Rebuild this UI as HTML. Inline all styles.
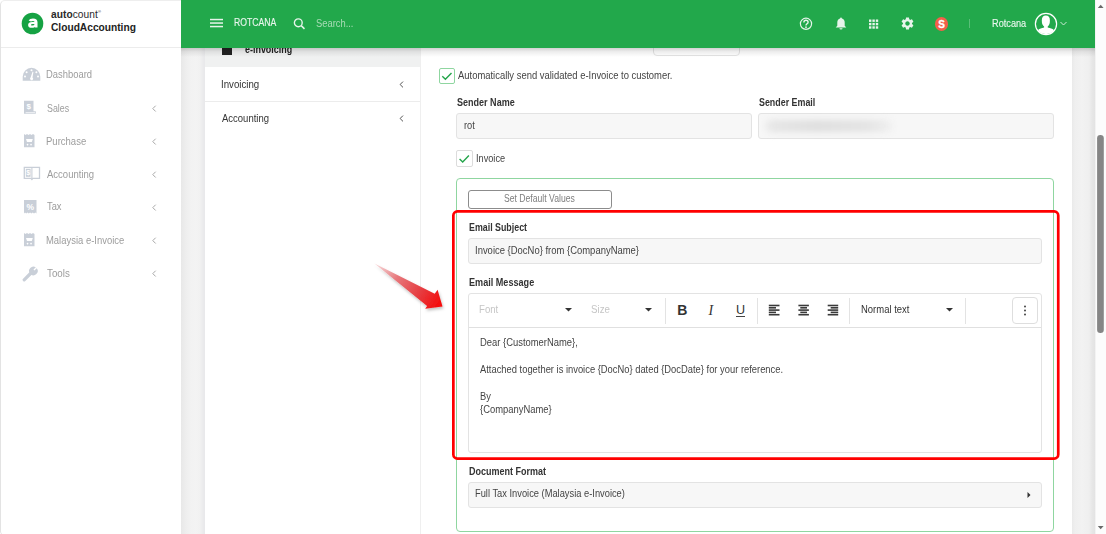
<!DOCTYPE html>
<html><head><meta charset="utf-8">
<style>
*{box-sizing:border-box;margin:0;padding:0}
html,body{width:1106px;height:534px;overflow:hidden;background:#fff;font-family:"Liberation Sans",sans-serif;position:relative}
.a{position:absolute;white-space:nowrap}
.tx{line-height:12px;height:12px}
#side{left:0;top:0;width:182px;height:535.5px;background:#fff;border-left:1px solid #e3e3e3;border-top:1px solid #eeeeee;border-bottom:1px solid #e3e3e3;border-bottom-left-radius:5px;border-top-left-radius:5px}
#logoSep{left:1px;top:47px;width:180px;height:1px;background:#ececec}
#content{left:181px;top:0;width:914px;height:534px;background:#efefef}
#gap{left:181px;top:0;width:24px;height:534px;background:linear-gradient(90deg,#e8e8e8 0px,#eeeeee 5px,#f2f2f2 10px,#f3f3f3 15px,#f1f1f1 19px,#e9e9eb 23px)}
#lpanel{left:205px;top:0;width:216px;height:534px;background:#fff;border-right:1px solid #efefef}
#lphead{left:205px;top:0;width:215px;height:67px;background:#f0f1f1}
#rpanel{left:421px;top:0;width:651px;height:534px;background:#fff}
#strip{left:1072px;top:0;width:23px;height:534px;background:linear-gradient(90deg,#eaeaea 0px,#efefef 3px,#f2f2f2 10px,#efefef 17px,#e7e7e7 20px,#e3e3e3 23px)}
#sb{left:1095px;top:0;width:11px;height:534px;background:#fcfcfc;border-left:1px solid #f3f3f3}
#header{left:181px;top:0;width:914px;height:48px;background:#22a84b}
#hshadow{left:181px;top:48px;width:914px;height:9px;background:linear-gradient(180deg,rgba(0,0,0,.18),rgba(0,0,0,.07) 40%,rgba(0,0,0,0))}
.st{font-size:9.3px;color:#a3a3a3}
.lt{font-size:9.4px;color:#333}
.lbl{font-size:9px;font-weight:bold;color:#333}
.inp{background:#f7f7f7;border:1px solid #e3e3e3;border-radius:3px}
.t{font-size:9.35px;color:#444}
.ic{fill:#c9cfd8}
</style></head><body>
<div id="side" class="a"></div>
<div id="logoSep" class="a"></div>
<!-- logo -->
<svg class="a" style="left:21.3px;top:11.5px" width="23" height="23" viewBox="0 0 23 23">
 <circle cx="11.5" cy="11.5" r="10.8" fill="#16a243"/>
 <path fill-rule="evenodd" d="M7.6 8.6 Q8.6 6.4 12 6.4 Q16.5 6.4 16.5 10.3 L16.5 15.6 L13.6 15.6 L13.6 14.9 Q12.7 15.8 10.8 15.8 Q7.1 15.8 7.1 12.9 Q7.1 9.9 11.3 9.9 L13.5 9.9 Q13.5 8.9 11.9 8.9 Q10.6 8.9 10 9.6 Z M13.5 11.9 L11.6 11.9 Q10 11.9 10 12.7 Q10 13.6 11.3 13.6 Q13.5 13.6 13.5 11.9 Z" fill="#fff"/>
</svg>
<div class="a" style="left:51px;top:5.5px;font-size:10.2px;color:#2a2a2a;line-height:12px;letter-spacing:0.05px"><b>auto</b>count<span style="font-size:4px;vertical-align:5px">®</span></div>
<div class="a" style="left:51px;top:22px;font-size:10.2px;font-weight:bold;color:#222;line-height:12px">CloudAccounting</div>

<!-- sidebar menu -->
<svg class="a" style="left:22px;top:67px" width="19" height="15" viewBox="0 0 19 15">
 <path class="ic" d="M9.5 0.8 A8.8 8.8 0 0 0 0.7 9.6 L0.7 13.8 L18.3 13.8 L18.3 9.6 A8.8 8.8 0 0 0 9.5 0.8 Z"/>
 <g fill="#fff"><circle cx="9.5" cy="3.3" r="1"/><circle cx="4.6" cy="5.2" r="1"/><circle cx="14.4" cy="5.2" r="1"/><circle cx="3" cy="9.6" r="1"/><circle cx="16" cy="9.6" r="1"/>
 <path d="M10.6 4.6 L11.4 4.9 L10.5 10.5 A1.5 1.5 0 1 1 8.6 10.6 Z"/></g>
</svg>
<div class="a" style="left:46.00px;top:67.30px;font-size:10.2px;line-height:15px;font-weight:normal;color:#9d9d9d;transform:scaleX(0.9233);transform-origin:0 0;">Dashboard</div>

<svg class="a" style="left:23px;top:100px" width="14" height="15" viewBox="0 0 14 15">
 <path class="ic" d="M1 0.8 H10.5 V11.3 H12.8 V13.8 H1 Z"/>
 <path d="M2.6 12.6 H12" stroke="#fff" stroke-width=".7"/>
 <text x="5.8" y="9" font-size="8" font-weight="bold" fill="#fff" text-anchor="middle" font-family="Liberation Sans">$</text>
</svg>
<div class="a" style="left:46.50px;top:100.50px;font-size:10.2px;line-height:15px;font-weight:normal;color:#9d9d9d;transform:scaleX(0.8711);transform-origin:0 0;">Sales</div>
<svg class="a st" style="left:147px;top:104px" width="12" height="9" viewBox="0 0 12 9"><path d="M8.7 1.7 L5.8 4.6 L8.7 7.5" stroke="#a8a8a8" stroke-width="1" fill="none"/></svg>

<svg class="a" style="left:23px;top:133px" width="13" height="16" viewBox="0 0 13 16">
 <path class="ic" d="M1 1 L2.5 2 L4 1 L5.5 2 L7 1 L8.5 2 L10 1 L11.5 2 V14.3 H1 Z"/>
 <path d="M3 6 H9.8 L8.8 9 H4 Z M4.5 10.8 a.8 .8 0 1 0 .1 0 M8 10.8 a.8 .8 0 1 0 .1 0" fill="#fff"/>
</svg>
<div class="a" style="left:46.40px;top:133.70px;font-size:10.2px;line-height:15px;font-weight:normal;color:#9d9d9d;transform:scaleX(0.9346);transform-origin:0 0;">Purchase</div>
<svg class="a" style="left:147px;top:137px" width="12" height="9" viewBox="0 0 12 9"><path d="M8.7 1.7 L5.8 4.6 L8.7 7.5" stroke="#a8a8a8" stroke-width="1" fill="none"/></svg>

<svg class="a" style="left:23px;top:166px" width="18" height="15" viewBox="0 0 18 15">
 <path d="M1.3 1.3 H16.5 V12.3 H9.8 L8.9 13.5 L8 12.3 H1.3 Z" fill="none" stroke="#c9cfd8" stroke-width="1.3"/>
 <path d="M8.9 1.3 V12.3" stroke="#c9cfd8" stroke-width="1.1"/>
 <rect x="2.8" y="2.8" width="4.8" height="8" fill="#c9cfd8"/>
 <text x="5.2" y="9.4" font-size="7" font-weight="bold" fill="#fff" text-anchor="middle" font-family="Liberation Sans">$</text>
</svg>
<div class="a" style="left:47.10px;top:166.90px;font-size:10.2px;line-height:15px;font-weight:normal;color:#9d9d9d;transform:scaleX(0.9344);transform-origin:0 0;">Accounting</div>
<svg class="a" style="left:147px;top:170px" width="12" height="9" viewBox="0 0 12 9"><path d="M8.7 1.7 L5.8 4.6 L8.7 7.5" stroke="#a8a8a8" stroke-width="1" fill="none"/></svg>

<svg class="a" style="left:23px;top:199px" width="15" height="16" viewBox="0 0 15 16">
 <path class="ic" d="M1 1 H13.5 V14.5 L12.3 13.5 L11 14.5 L9.7 13.5 L8.4 14.5 L7.1 13.5 L5.8 14.5 L4.5 13.5 L3.2 14.5 L2 13.5 L1 14.5 Z"/>
 <text x="7.2" y="10.6" font-size="8.5" font-weight="bold" fill="#fff" text-anchor="middle" font-family="Liberation Sans">%</text>
</svg>
<div class="a" style="left:47.10px;top:199.40px;font-size:10.2px;line-height:15px;font-weight:normal;color:#9d9d9d;transform:scaleX(0.9143);transform-origin:0 0;">Tax</div>
<svg class="a" style="left:147px;top:203px" width="12" height="9" viewBox="0 0 12 9"><path d="M8.7 1.7 L5.8 4.6 L8.7 7.5" stroke="#a8a8a8" stroke-width="1" fill="none"/></svg>

<svg class="a" style="left:23px;top:232px" width="13" height="16" viewBox="0 0 13 16">
 <path class="ic" d="M1 1 L2.5 2 L4 1 L5.5 2 L7 1 L8.5 2 L10 1 L11.5 2 V14.3 H1 Z"/>
 <path d="M3 6 H9.8 L8.8 9 H4 Z M4.5 10.8 a.8 .8 0 1 0 .1 0 M8 10.8 a.8 .8 0 1 0 .1 0" fill="#fff"/>
</svg>
<div class="a" style="left:46.40px;top:232.90px;font-size:10.2px;line-height:15px;font-weight:normal;color:#9d9d9d;transform:scaleX(0.9272);transform-origin:0 0;">Malaysia e-Invoice</div>
<svg class="a" style="left:147px;top:236px" width="12" height="9" viewBox="0 0 12 9"><path d="M8.7 1.7 L5.8 4.6 L8.7 7.5" stroke="#a8a8a8" stroke-width="1" fill="none"/></svg>

<svg class="a" style="left:22px;top:265px" width="17" height="17" viewBox="0 0 17 17">
 <path d="M2.2 14.8 L9 8" stroke="#c9cfd8" stroke-width="3.2" stroke-linecap="round"/>
 <path class="ic" d="M8 8.5 A4.3 4.3 0 0 1 13.8 2.3 L11.5 4.6 L12.4 5.6 L14.8 3.3 A4.3 4.3 0 0 1 8.6 9.2 Z"/>
</svg>
<div class="a" style="left:47.10px;top:265.80px;font-size:10.2px;line-height:15px;font-weight:normal;color:#9d9d9d;transform:scaleX(0.9587);transform-origin:0 0;">Tools</div>
<svg class="a" style="left:147px;top:269px" width="12" height="9" viewBox="0 0 12 9"><path d="M8.7 1.7 L5.8 4.6 L8.7 7.5" stroke="#a8a8a8" stroke-width="1" fill="none"/></svg>

<div id="content" class="a"></div>
<div id="gap" class="a"></div>
<div id="lpanel" class="a"></div>
<div id="lphead" class="a"></div>
<div id="rpanel" class="a"></div>
<div id="strip" class="a"></div>
<div id="sb" class="a"></div>

<!-- left panel -->
<div class="a" style="left:222px;top:44px;width:10px;height:11px;background:#222"></div>
<div class="a" style="left:245.10px;top:42.70px;font-size:10.0px;line-height:14px;font-weight:bold;color:#222;transform:scaleX(0.8940);transform-origin:0 0;">e-invoicing</div>
<div class="a" style="left:221.04px;top:77.00px;font-size:10.4px;line-height:15px;font-weight:normal;color:#333;transform:scaleX(0.9322);transform-origin:0 0;">Invoicing</div>
<svg class="a" style="left:394px;top:80px" width="12" height="9" viewBox="0 0 12 9"><path d="M9 1.6 L6.1 4.5 L9 7.4" stroke="#555" stroke-width="1" fill="none"/></svg>
<div class="a" style="left:205px;top:101px;width:215px;height:1px;background:#ececec"></div>
<div class="a" style="left:221.60px;top:111.40px;font-size:10.4px;line-height:15px;font-weight:normal;color:#333;transform:scaleX(0.9140);transform-origin:0 0;">Accounting</div>
<svg class="a" style="left:394px;top:114px" width="12" height="9" viewBox="0 0 12 9"><path d="M9 1.6 L6.1 4.5 L9 7.4" stroke="#555" stroke-width="1" fill="none"/></svg>


<!-- right panel content -->
<div class="a" style="left:653px;top:30px;width:87px;height:26px;border:1px solid #e3e3e3;border-radius:4px;background:#fff"></div>
<div class="a" style="left:439px;top:68px;width:16px;height:16px;border:1px solid #8fd6a0;border-radius:2px;background:#fff"></div>
<svg class="a" style="left:439px;top:68px" width="16" height="16" viewBox="0 0 16 16"><path d="M3.3 8.3 L6.4 11.3 L12.5 4.9" fill="none" stroke="#24a54b" stroke-width="1.4"/></svg>
<div class="a" style="left:458.42px;top:69.00px;font-size:10.0px;line-height:14px;font-weight:normal;color:#444;transform:scaleX(0.9431);transform-origin:0 0;">Automatically send validated e-Invoice to customer.</div>

<div class="a" style="left:456.76px;top:95.60px;font-size:10.0px;line-height:14px;font-weight:bold;color:#333;transform:scaleX(0.9027);transform-origin:0 0;">Sender Name</div>
<div class="a inp" style="left:456px;top:113px;width:296px;height:26px"></div>
<div class="a" style="left:463.59px;top:118.60px;font-size:10.0px;line-height:14px;font-weight:normal;color:#444;transform:scaleX(0.9300);transform-origin:0 0;">rot</div>
<div class="a" style="left:759.10px;top:95.50px;font-size:10.0px;line-height:14px;font-weight:bold;color:#333;transform:scaleX(0.8886);transform-origin:0 0;">Sender Email</div>
<div class="a inp" style="left:758px;top:113px;width:296px;height:26px"></div>
<div class="a" style="left:766px;top:119.5px;width:126px;height:12px;border-radius:6px;background:linear-gradient(90deg,#e6e6e6,#dedede 40%,#e3e3e3 80%,#efefef);filter:blur(3.5px)"></div>

<div class="a" style="left:456px;top:150px;width:17px;height:17px;border:1px solid #dcdcdc;border-radius:2px;background:#fff"></div>
<svg class="a" style="left:456px;top:150px" width="17" height="17" viewBox="0 0 17 17"><path d="M3.6 8.9 L6.7 11.9 L12.9 5.4" fill="none" stroke="#24a54b" stroke-width="1.4"/></svg>
<div class="a" style="left:475.80px;top:151.60px;font-size:10.0px;line-height:14px;font-weight:normal;color:#444;transform:scaleX(0.9183);transform-origin:0 0;">Invoice</div>

<div class="a" style="left:456px;top:178px;width:598px;height:354px;border:1px solid #8fd6a0;border-radius:4px"></div>
<div class="a" style="left:468px;top:190px;width:144px;height:19px;border:1px solid #8c8c8c;border-radius:3px;background:#fff"></div>
<div class="a" style="left:504.42px;top:192.20px;font-size:10.0px;line-height:14px;font-weight:normal;color:#7e7e7e;transform:scaleX(0.8624);transform-origin:0 0;">Set Default Values</div>

<div class="a" style="left:469.10px;top:220.90px;font-size:10.0px;line-height:14px;font-weight:bold;color:#333;transform:scaleX(0.8844);transform-origin:0 0;">Email Subject</div>
<div class="a inp" style="left:468px;top:238px;width:574px;height:26px"></div>
<div class="a" style="left:475.00px;top:243.70px;font-size:10.0px;line-height:14px;font-weight:normal;color:#444;transform:scaleX(0.9458);transform-origin:0 0;">Invoice {DocNo} from {CompanyName}</div>

<div class="a" style="left:469.10px;top:276.30px;font-size:10.0px;line-height:14px;font-weight:bold;color:#333;transform:scaleX(0.9091);transform-origin:0 0;">Email Message</div>
<div class="a" style="left:468px;top:293px;width:574px;height:160px;border:1px solid #e3e3e3;border-radius:3px;background:#fff"></div>
<div class="a" style="left:469px;top:327px;width:572px;height:1px;background:#e0e0e0"></div>
<div class="a" style="left:479.04px;top:303.30px;font-size:10.0px;line-height:14px;font-weight:normal;color:#c6c6c6;transform:scaleX(0.9628);transform-origin:0 0;">Font</div>
<svg class="a" style="left:564px;top:307px" width="9" height="6" viewBox="0 0 9 6"><path d="M1 1 L8 1 L4.5 4.5 Z" fill="#333"/></svg>
<div class="a" style="left:591.30px;top:303.30px;font-size:10.0px;line-height:14px;font-weight:normal;color:#c6c6c6;transform:scaleX(0.9727);transform-origin:0 0;">Size</div>
<svg class="a" style="left:644px;top:307px" width="9" height="6" viewBox="0 0 9 6"><path d="M1 1 L8 1 L4.5 4.5 Z" fill="#333"/></svg>
<div class="a" style="left:665px;top:298px;width:1px;height:26px;background:#e3e3e3"></div>
<div class="a" style="left:757px;top:298px;width:1px;height:26px;background:#e3e3e3"></div>
<div class="a" style="left:849px;top:298px;width:1px;height:26px;background:#e3e3e3"></div>
<div class="a" style="left:965px;top:298px;width:1px;height:26px;background:#e3e3e3"></div>
<div class="a" style="left:677.3px;top:302.2px;font-size:14px;font-weight:bold;color:#333;line-height:16px">B</div>
<div class="a" style="left:708.5px;top:303.2px;font-size:14px;font-style:italic;color:#333;line-height:16px;font-family:'Liberation Serif'">I</div>
<div class="a" style="left:736px;top:302px;font-size:12.6px;color:#333;line-height:16px">U</div><div class="a" style="left:736px;top:316px;width:9px;height:1px;background:#444"></div>
<svg class="a" style="left:768px;top:304px" width="12" height="12" viewBox="0 0 12 12"><g fill="#3a3a3a"><rect x="0.8" y="0.7" width="10.7" height="1.6"/><rect x="0.8" y="3" width="7.2" height="1.6"/><rect x="0.8" y="5.3" width="10.7" height="1.6"/><rect x="0.8" y="7.6" width="7.2" height="1.6"/><rect x="0.8" y="9.9" width="10.7" height="1.6"/></g></svg>
<svg class="a" style="left:798px;top:304px" width="12" height="12" viewBox="0 0 12 12"><g fill="#3a3a3a"><rect x="0.4" y="0.7" width="10.5" height="1.6"/><rect x="2.3" y="3" width="6.7" height="1.6"/><rect x="0.4" y="5.3" width="10.5" height="1.6"/><rect x="2.3" y="7.6" width="6.7" height="1.6"/><rect x="0.4" y="9.9" width="10.5" height="1.6"/></g></svg>
<svg class="a" style="left:827px;top:304px" width="12" height="12" viewBox="0 0 12 12"><g fill="#3a3a3a"><rect x="0.7" y="0.7" width="10.5" height="1.6"/><rect x="3.7" y="3" width="7.5" height="1.6"/><rect x="0.7" y="5.3" width="10.5" height="1.6"/><rect x="3.7" y="7.6" width="7.5" height="1.6"/><rect x="0.7" y="9.9" width="10.5" height="1.6"/></g></svg>
<div class="a" style="left:860.76px;top:303.00px;font-size:10.0px;line-height:14px;font-weight:normal;color:#333;transform:scaleX(0.9467);transform-origin:0 0;">Normal text</div>
<svg class="a" style="left:945px;top:307px" width="9" height="6" viewBox="0 0 9 6"><path d="M1 1 L8 1 L4.5 4.5 Z" fill="#333"/></svg>
<div class="a" style="left:1012px;top:297px;width:26px;height:27px;border:1px solid #dedede;border-radius:4px;background:#fff"></div>
<svg class="a" style="left:1012px;top:297px" width="26" height="27" viewBox="0 0 26 27"><g fill="#444"><circle cx="13" cy="9.5" r="1"/><circle cx="13" cy="13.5" r="1"/><circle cx="13" cy="17.5" r="1"/></g></svg>

<div class="a" style="left:479.76px;top:336.40px;font-size:10.0px;line-height:14px;font-weight:normal;color:#444;transform:scaleX(0.9410);transform-origin:0 0;">Dear {CustomerName},</div>
<div class="a" style="left:479.76px;top:363.20px;font-size:10.0px;line-height:14px;font-weight:normal;color:#444;transform:scaleX(0.9368);transform-origin:0 0;">Attached together is invoice {DocNo} dated {DocDate} for your reference.</div>
<div class="a" style="left:479.76px;top:390.30px;font-size:10.0px;line-height:14px;font-weight:normal;color:#444;transform:scaleX(0.9300);transform-origin:0 0;">By</div>
<div class="a" style="left:479.76px;top:403.30px;font-size:10.0px;line-height:14px;font-weight:normal;color:#444;transform:scaleX(0.9402);transform-origin:0 0;">{CompanyName}</div>

<div class="a" style="left:468.60px;top:464.80px;font-size:10.0px;line-height:14px;font-weight:bold;color:#333;transform:scaleX(0.8999);transform-origin:0 0;">Document Format</div>
<div class="a inp" style="left:468px;top:482px;width:574px;height:26px"></div>
<div class="a" style="left:475.42px;top:487.20px;font-size:10.0px;line-height:14px;font-weight:normal;color:#444;transform:scaleX(0.9311);transform-origin:0 0;">Full Tax Invoice (Malaysia e-Invoice)</div>
<svg class="a" style="left:1026px;top:491px" width="6" height="8" viewBox="0 0 6 8"><path d="M1.5 1 L4.5 4 L1.5 7 Z" fill="#333"/></svg>

<!-- red highlight -->
<svg class="a" style="left:440px;top:200px" width="630" height="270" viewBox="0 0 630 270"><rect x="13.35" y="11.45" width="604.9" height="247.1" rx="4" fill="none" stroke="#ff0000" stroke-width="2.7"/></svg>
<svg class="a" style="left:372px;top:260px" width="80" height="55" viewBox="0 0 80 55">
 <defs><linearGradient id="rg" gradientUnits="userSpaceOnUse" x1="2" y1="3" x2="68" y2="45"><stop offset="0" stop-color="#f4b9bc" stop-opacity=".5"/><stop offset=".35" stop-color="#e7777b"/><stop offset=".7" stop-color="#e63c40"/><stop offset="1" stop-color="#f50a0a"/></linearGradient>
 <filter id="sh" x="-20%" y="-20%" width="140%" height="140%"><feDropShadow dx="1" dy="2" stdDeviation="1.5" flood-color="#000" flood-opacity=".25"/></filter></defs>
 <path d="M2.5 3.4 L62.7 33.8 L65.6 29.7 L70.5 46.5 L53.2 48.8 L55.1 45.9 Z" fill="url(#rg)" filter="url(#sh)"/>
</svg>

<!-- scrollbar -->
<svg class="a" style="left:1095px;top:0" width="11" height="534" viewBox="0 0 11 534">
 <path d="M2.8 8 L5.7 4.8 L8.6 8 Z" fill="#6a6a6a"/>
 <rect x="2.1" y="135" width="6.7" height="198" rx="3.3" fill="#868686"/>
 <path d="M2.8 526 L5.7 529.2 L8.6 526 Z" fill="#6a6a6a"/>
</svg>

<div id="header" class="a"></div>
<div id="hshadow" class="a"></div>
<!-- header content -->
<svg class="a" style="left:210px;top:18px" width="14" height="10" viewBox="0 0 14 10"><g fill="#e6f4ea"><rect x="0" y="0.8" width="13" height="1.5"/><rect x="0" y="4.3" width="13" height="1.5"/><rect x="0" y="7.8" width="13" height="1.5"/></g></svg>
<div class="a" style="left:233.93px;top:16.10px;font-size:10.0px;line-height:14px;font-weight:normal;color:#eaf6ee;transform:scaleX(0.8649);transform-origin:0 0;-webkit-text-stroke:0.12px #eaf6ee;">ROTCANA</div>
<svg class="a" style="left:293px;top:18px" width="13" height="12" viewBox="0 0 13 12"><circle cx="5.3" cy="4.8" r="3.9" fill="none" stroke="#e6f4ea" stroke-width="1.4"/><path d="M8.2 7.6 L11.5 10.9" stroke="#e6f4ea" stroke-width="1.5"/></svg>
<div class="a" style="left:316.10px;top:16.70px;font-size:10.0px;line-height:14px;font-weight:normal;color:#a9dcb6;transform:scaleX(0.9364);transform-origin:0 0;">Search...</div>

<svg class="a" style="left:799px;top:17px" width="14" height="14" viewBox="0 0 14 14"><circle cx="7" cy="6.8" r="5.6" fill="none" stroke="#e6f4ea" stroke-width="1.2"/><path d="M4.9 5.4 Q4.9 3.3 7 3.3 Q9.1 3.3 9.1 5.2 Q9.1 6.3 7.9 6.9 Q7 7.4 7 8.5" fill="none" stroke="#e6f4ea" stroke-width="1.4"/><circle cx="7" cy="10.2" r=".85" fill="#e6f4ea"/></svg>
<svg class="a" style="left:835px;top:17px" width="12" height="13" viewBox="0 0 12 13"><path d="M6 0.5 Q6.9 0.5 6.9 1.4 Q9.7 2.1 9.7 5.5 L9.7 8.8 L11.3 10.5 L0.7 10.5 L2.3 8.8 L2.3 5.5 Q2.3 2.1 5.1 1.4 Q5.1 0.5 6 0.5 Z M4.4 11.2 H7.6 Q7.6 12.6 6 12.6 Q4.4 12.6 4.4 11.2 Z" fill="#e6f4ea"/></svg>
<svg class="a" style="left:868px;top:18.7px" width="11" height="11" viewBox="0 0 11 11"><g fill="#e6f4ea"><rect x="1" y="0.5" width="2.4" height="2.4"/><rect x="4.4" y="0.5" width="2.4" height="2.4"/><rect x="7.8" y="0.5" width="2.4" height="2.4"/><rect x="1" y="3.9" width="2.4" height="2.4"/><rect x="4.4" y="3.9" width="2.4" height="2.4"/><rect x="7.8" y="3.9" width="2.4" height="2.4"/><rect x="1" y="7.3" width="2.4" height="2.4"/><rect x="4.4" y="7.3" width="2.4" height="2.4"/><rect x="7.8" y="7.3" width="2.4" height="2.4"/></g></svg>
<svg class="a" style="left:900px;top:16px" width="15" height="15" viewBox="0 0 24 24"><path fill="#e6f4ea" d="M19.14 12.94c.04-.3.06-.61.06-.94 0-.32-.02-.64-.07-.94l2.03-1.58c.18-.14.23-.41.12-.61l-1.92-3.32c-.12-.22-.37-.29-.59-.22l-2.39.96c-.5-.38-1.03-.7-1.62-.94l-.36-2.54c-.04-.24-.24-.41-.48-.41h-3.84c-.24 0-.43.17-.47.41l-.36 2.54c-.59.24-1.13.57-1.62.94l-2.39-.96c-.22-.08-.47 0-.59.22L2.74 8.87c-.12.21-.8.47.12.61l2.030 1.580c-.05.3-.09.63-.09.94s.2.64.07.94l-2.03 1.58c-.18.14-.23.41-.12.61l1.92 3.32c.12.22.37.29.59.22l2.39-.96c.5.38 1.03.7 1.62.94l.36 2.54c.05.24.24.41.48.41h3.84c.24 0 .44-.17.47-.41l.36-2.54c.59-.24 1.13-.56 1.62-.94l2.39.96c.22.08.47 0 .59-.22l1.92-3.32c.12-.22.07-.47-.12-.61l-2.01-1.58zM12 15.6c-1.98 0-3.6-1.62-3.6-3.6s1.62-3.6 3.6-3.6 3.6 1.62 3.6 3.6-1.62 3.6-3.6 3.6z"/></svg>
<div class="a" style="left:934.5px;top:17.3px;width:13.5px;height:13.5px;border-radius:50%;background:#f4604a"></div>
<div class="a" style="left:934.5px;top:18.2px;width:14px;height:14px;line-height:14px;text-align:center;font-size:10px;font-weight:bold;color:#fff;-webkit-text-stroke:0.3px #fff">S</div>
<div class="a" style="left:969px;top:19px;width:1px;height:9px;background:rgba(255,255,255,.25)"></div>
<div class="a" style="left:992.10px;top:16.70px;font-size:10.0px;line-height:14px;font-weight:normal;color:#eaf6ee;transform:scaleX(0.9181);transform-origin:0 0;-webkit-text-stroke:0.12px #eaf6ee;">Rotcana</div>
<svg class="a" style="left:1034px;top:12px" width="24" height="24" viewBox="0 0 24 24"><defs><clipPath id="avc"><circle cx="12" cy="12" r="10.2"/></clipPath></defs><circle cx="12" cy="12" r="10.6" fill="none" stroke="#fff" stroke-width="1.2"/><g clip-path="url(#avc)" fill="#fff"><path d="M11.8 3.6 Q15.9 3.6 15.9 8.4 Q15.9 12.8 13.7 14.4 L13.7 15.6 Q19.8 16.6 21.2 20 L21.2 23 L2.8 23 L2.8 20 Q4.2 16.6 10.1 15.6 L10.1 14.4 Q7.8 12.8 7.8 8.4 Q7.8 3.6 11.8 3.6 Z"/></g></svg>
<svg class="a" style="left:1059px;top:20px" width="9" height="7" viewBox="0 0 9 7"><path d="M1.5 2 L4.5 5 L7.5 2" fill="none" stroke="#cdebd5" stroke-width="1"/></svg>

</body></html>
